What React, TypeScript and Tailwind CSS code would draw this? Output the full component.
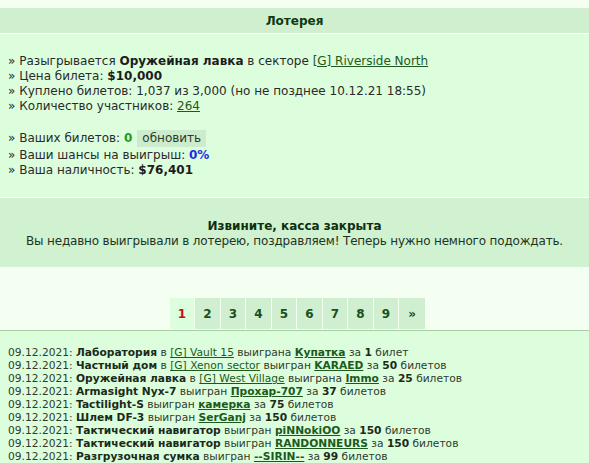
import React from "react";

const font = "font-['DejaVu_Sans','Verdana',sans-serif]";

function Link({ children, bold }: { children: React.ReactNode; bold?: boolean }) {
  return (
    <a className={`underline text-[#1b5a1b] ${bold ? "font-bold" : ""}`} href="#">
      {children}
    </a>
  );
}

type Win = {
  item: string;
  sector?: string;
  verb: string;
  winner: string;
  count: number;
  word: string;
};

const wins: Win[] = [
  { item: "Лаборатория", sector: "[G] Vault 15", verb: "выиграна", winner: "Купатка", count: 1, word: "билет" },
  { item: "Частный дом", sector: "[G] Xenon sector", verb: "выигран", winner: "KARAED", count: 50, word: "билетов" },
  { item: "Оружейная лавка", sector: "[G] West Village", verb: "выиграна", winner: "Immo", count: 25, word: "билетов" },
  { item: "Armasight Nyx-7", verb: "выигран", winner: "Прохар-707", count: 37, word: "билетов" },
  { item: "Tactilight-S", verb: "выигран", winner: "камерка", count: 75, word: "билетов" },
  { item: "Шлем DF-3", verb: "выигран", winner: "SerGanj", count: 150, word: "билетов" },
  { item: "Тактический навигатор", verb: "выигран", winner: "piNNokiOO", count: 150, word: "билетов" },
  { item: "Тактический навигатор", verb: "выигран", winner: "RANDONNEURS", count: 150, word: "билетов" },
  { item: "Разгрузочная сумка", verb: "выигран", winner: "--SIRIN--", count: 99, word: "билетов" },
];

const pages = ["1", "2", "3", "4", "5", "6", "7", "8", "9", "»"];

export default function App() {
  return (
    <div className={`min-h-screen bg-[#f4fff2] pt-2 ${font} text-[12px] text-[#2a2a2a]`}>
      <div className="h-[25px] bg-[#cfefcf] flex items-center justify-center font-bold text-[#0f3a0f]">
        Лотерея
      </div>

      <div className="border-t border-white bg-[#ddfedd] px-2 pt-[20px] pb-[19px]">
        <div className="leading-[15px]">
          <div>» Разыгрывается <b className="text-[#1c1c1c]">Оружейная лавка</b> в секторе <Link>[G] Riverside North</Link></div>
          <div>» Цена билета: <b className="text-[#1c1c1c]">$10,000</b></div>
          <div>» Куплено билетов: 1,037 из 3,000 (но не позднее 10.12.21 18:55)</div>
          <div>» Количество участников: <Link>264</Link></div>
        </div>
        <div className="mt-[15px] leading-[15px]">
          <div className="flex items-center h-[19px] pb-px">
            <span>» Ваших билетов:&nbsp;</span>
            <b className="text-[#1f9a1f]">0</b>
            <span className="ml-[5px] inline-flex items-center h-[17px] px-[5px] bg-[#cdeccd] text-[#2a3a2a]">обновить</span>
          </div>
          <div>» Ваши шансы на выигрыш: <b className="text-[#1c2ee0]">0%</b></div>
          <div>» Ваша наличность: <b className="text-[#1c1c1c]">$76,401</b></div>
        </div>
      </div>

      <div className="border-t border-white bg-[#d0f2d0] h-[70px] flex flex-col items-center justify-center leading-[15px] pt-[2px]">
        <div className="font-bold text-[#0f2f0f]">Извините, касса закрыта</div>
        <div className="text-[#1f3323] tracking-[-0.17px]">Вы недавно выигрывали в лотерею, поздравляем! Теперь нужно немного подождать.</div>
      </div>

      <div className="pt-[31px] pb-[1px] flex justify-center">
        <div className="flex ml-[6px] gap-px">
          {pages.map((p, i) => (
            <div
              key={p}
              className={`h-[31px] flex items-center justify-center font-bold ${
                i === 0 ? "bg-[#ddfedd] text-[#c0101a]" : "bg-[#d0efd0] text-[#1b4f1b]"
              } ${p === "»" ? "w-[26px]" : "w-[24.5px]"}`}
            >
              {p}
            </div>
          ))}
        </div>
      </div>

      <div className="border-t border-[#a6cfa6] bg-[#ddfedd] px-2 pt-[15px] pb-4 text-[10.67px] leading-[13px] text-[#2e3a2e]">
        {wins.map((w, i) => (
          <div key={i} className="whitespace-nowrap">
            09.12.2021: <b className="text-[#1a2a1a]">{w.item}</b>{" "}
            {w.sector && (
              <>
                в <Link>{w.sector}</Link>{" "}
              </>
            )}
            {w.verb} <Link bold>{w.winner}</Link> за <b className="text-[#1a2a1a]">{w.count}</b> {w.word}
          </div>
        ))}
      </div>
    </div>
  );
}
